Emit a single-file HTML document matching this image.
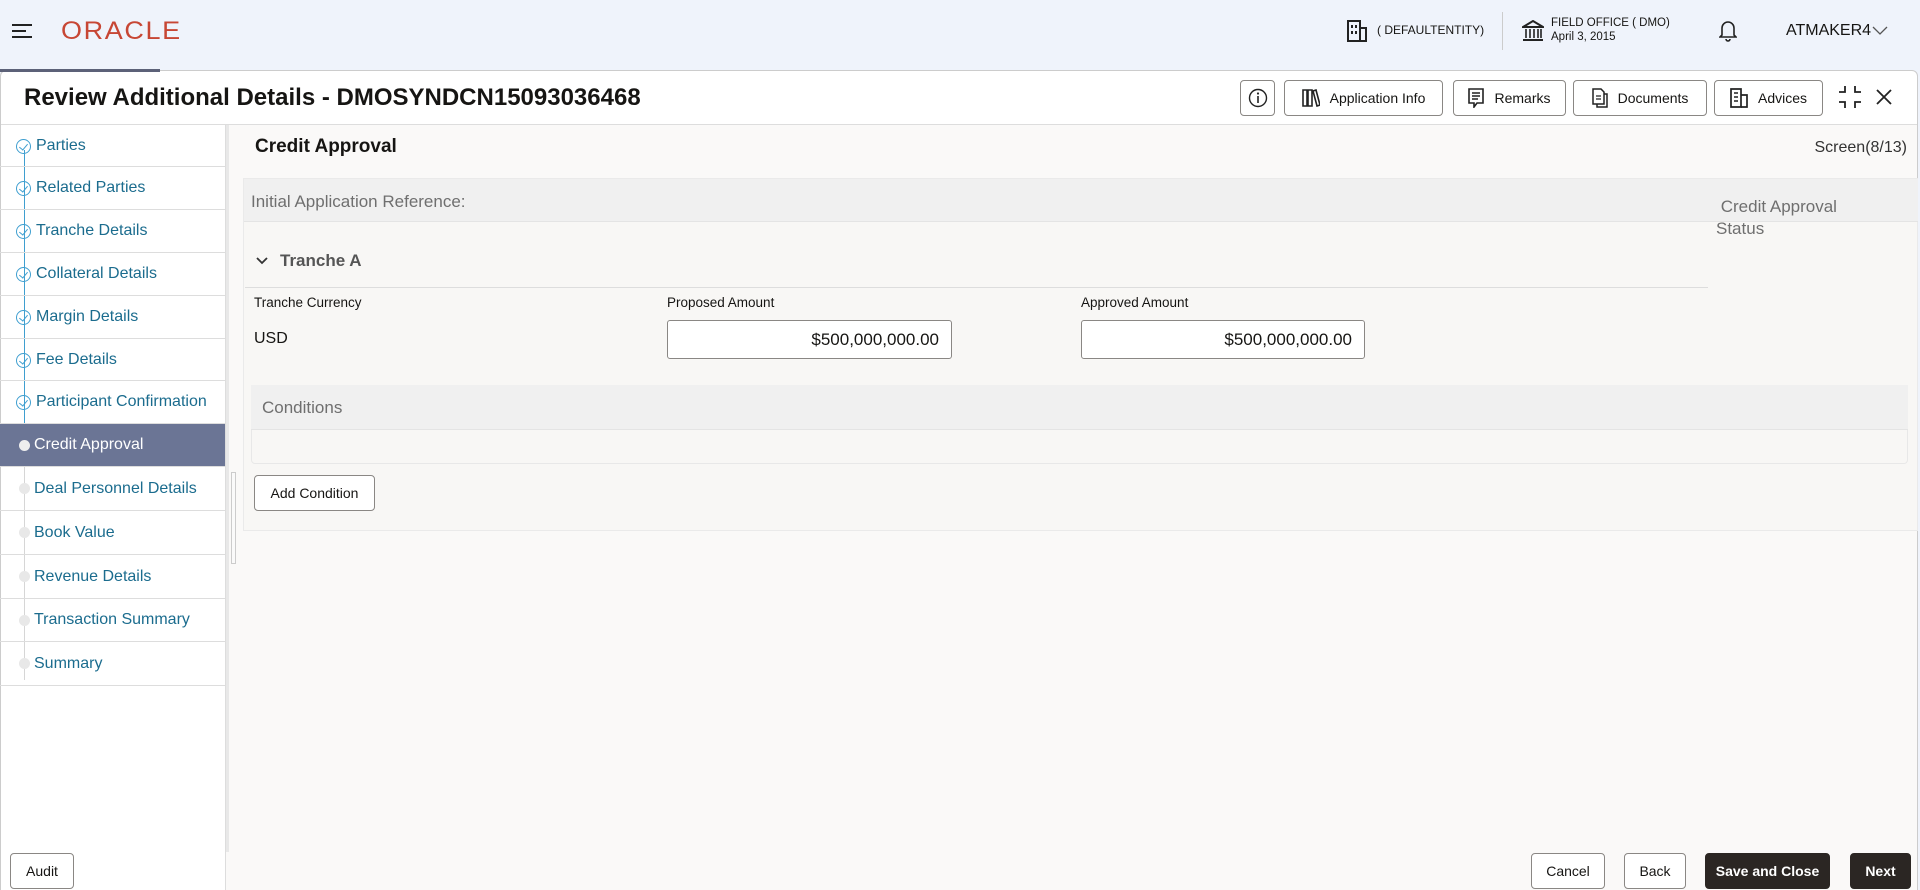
<!DOCTYPE html>
<html><head><meta charset="utf-8"><style>
*{box-sizing:border-box;margin:0;padding:0}
body{width:1920px;height:890px;overflow:hidden;background:#eff3fb;font-family:"Liberation Sans",sans-serif;position:relative;color:#161513}
.a{position:absolute}
.btn{position:absolute;border:1px solid #8a8784;border-radius:4px;background:#fff;font-size:14px;display:flex;align-items:center;justify-content:center;gap:10px;color:#161513}
.nav{position:absolute;left:0;width:225px;border-bottom:1px solid #ddd;font-size:16px;color:#1b6c8e;padding-left:36px;display:flex;align-items:center}
.dot{position:absolute;left:19px;width:11px;height:11px;border-radius:50%;background:#e8e8e8}
.chk{position:absolute;left:16px;width:15px;height:15px;border-radius:50%;border:1.3px solid #3f9fd0}
.chk:after{content:"";position:absolute;left:4px;top:2px;width:4px;height:7px;border:solid #3f9fd0;border-width:0 1.3px 1.3px 0;transform:rotate(40deg)}
.lbl{position:absolute;font-size:13.5px;color:#161513}
.inp{position:absolute;background:#fff;border:1px solid #8a8784;border-radius:3px;height:39px;font-size:17px;text-align:right;padding:9px 12px}
</style></head><body>
<div class="a" style="left:12px;top:24px;width:20px;height:2px;background:#222"></div>
<div class="a" style="left:12px;top:30px;width:14px;height:2px;background:#222"></div>
<div class="a" style="left:12px;top:36px;width:20px;height:2px;background:#222"></div>
<div class="a" style="left:61px;top:17px;font-size:25px;color:#c74634;letter-spacing:1.5px;transform:scaleX(1.08);transform-origin:left">ORACLE</div>
<svg class="a" style="left:1347px;top:20px" width="20" height="22" viewBox="0 0 20 22"><rect x="1" y="1" width="12" height="20" fill="none" stroke="#222" stroke-width="2"/><rect x="13" y="8" width="6" height="13" fill="none" stroke="#222" stroke-width="2"/><rect x="4" y="5" width="2" height="3" fill="#222"/><rect x="8" y="5" width="2" height="3" fill="#222"/><rect x="4" y="11" width="2" height="3" fill="#222"/><rect x="8" y="11" width="2" height="3" fill="#222"/></svg>
<div class="a" style="left:1377px;top:23px;font-size:12px">( DEFAULTENTITY)</div>
<div class="a" style="left:1502px;top:12px;width:1px;height:38px;background:#ccc"></div>
<svg class="a" style="left:1522px;top:20px" width="22" height="22" viewBox="0 0 22 22"><path d="M1 7 L11 1 L21 7 Z" fill="none" stroke="#222" stroke-width="2"/><path d="M4 9v9M8 9v9M12 9v9M16 9v9M19 9v9" stroke="#222" stroke-width="1.6"/><path d="M1 20h20" stroke="#222" stroke-width="2"/></svg>
<div class="a" style="left:1551px;top:16px;font-size:11.5px;line-height:14px">FIELD OFFICE ( DMO)<br>April 3, 2015</div>
<svg class="a" style="left:1719px;top:18px" width="18" height="24" viewBox="0 0 18 24"><path d="M3 17V10a6 6 0 0 1 12 0v7l2 2H1z" fill="none" stroke="#222" stroke-width="1.6"/><path d="M7 21a2 2 0 0 0 4 0" fill="none" stroke="#222" stroke-width="1.6"/></svg>
<div class="a" style="left:1786px;top:22px;font-size:16px">ATMAKER4</div>
<svg class="a" style="left:1872px;top:26px" width="16" height="10"><path d="M1 1l7 7 7-7" fill="none" stroke="#555" stroke-width="1.3"/></svg>
<div class="a" style="left:0;top:70px;width:1918px;height:820px;background:#fff;border:1px solid #ccc;border-radius:6px 6px 0 0"></div>
<div class="a" style="left:0;top:69px;width:160px;height:3px;background:#5c6178"></div>
<div class="a" style="left:24px;top:84px;font-size:24px;font-weight:bold;color:#161513">Review Additional Details - DMOSYNDCN15093036468</div>
<div class="btn" style="left:1240px;top:80px;width:35px;height:36px"><svg width="20" height="20"><circle cx="10" cy="10" r="8.5" fill="none" stroke="#222" stroke-width="1.4"/><path d="M10 8v7" stroke="#222" stroke-width="1.6"/><circle cx="10" cy="5.5" r="1.1" fill="#222"/></svg></div>
<div class="btn" style="left:1284px;top:80px;width:159px;height:36px"><svg width="18" height="18"><path d="M1 1h4v16H1zM6 1h4v16H6zM11 2l3-1 4 15-3 1z" fill="none" stroke="#222" stroke-width="1.6"/></svg>Application Info</div>
<div class="btn" style="left:1453px;top:80px;width:113px;height:36px"><svg width="16" height="20"><path d="M1 1h14v14H9l-3 4v-4H1z" fill="none" stroke="#222" stroke-width="1.6"/><path d="M4 5h8M4 8h8M4 11h6" stroke="#222" stroke-width="1.4"/></svg>Remarks</div>
<div class="btn" style="left:1573px;top:80px;width:134px;height:36px"><svg width="16" height="20"><path d="M1 1h8l3 3v12H1z" fill="none" stroke="#222" stroke-width="1.5"/><path d="M12 6h3v13H5v-3" fill="none" stroke="#222" stroke-width="1.5"/><path d="M4 8h5M4 11h5" stroke="#222" stroke-width="1.3"/></svg>Documents</div>
<div class="btn" style="left:1714px;top:80px;width:109px;height:36px"><svg width="18" height="20"><path d="M1 1h10v18H1z" fill="none" stroke="#222" stroke-width="1.7"/><path d="M11 7h6v12h-6" fill="none" stroke="#222" stroke-width="1.7"/><path d="M4 5h4M4 9h4M4 13h4" stroke="#222" stroke-width="1.5"/></svg>Advices</div>
<svg class="a" style="left:1838px;top:85px" width="24" height="24"><path d="M7 1v6H1M17 1v6h6M7 23v-6H1M17 23v-6h6" fill="none" stroke="#222" stroke-width="1.8"/></svg>
<svg class="a" style="left:1876px;top:89px" width="16" height="16"><path d="M1 1l14 14M15 1L1 15" stroke="#222" stroke-width="1.8"/></svg>
<div class="a" style="left:1px;top:124px;width:1916px;height:1px;background:#ddd"></div>
<div class="a" style="left:226px;top:125px;width:1691px;height:765px;background:#faf9f8"></div>
<div class="a" style="left:226px;top:125px;width:3px;height:727px;background:#e8e8e8"></div>
<div class="a" style="left:231px;top:472px;width:5px;height:92px;border:1px solid #ccc;background:#fafafa"></div>
<div class="a" style="left:1px;top:125px;width:225px;height:727px;background:#fff;border-right:1px solid #ddd"></div>
<div class="a" style="left:24px;top:150px;width:1px;height:530px;background:#d6d6d6"></div>
<div class="a" style="left:24px;top:150px;width:1px;height:274px;background:#3f9fd0"></div>
<div class="nav" style="top:125px;height:42px"><span class="chk" style="top:14px"></span>Parties</div>
<div class="nav" style="top:167px;height:43px"><span class="chk" style="top:14px"></span>Related Parties</div>
<div class="nav" style="top:210px;height:43px"><span class="chk" style="top:14px"></span>Tranche Details</div>
<div class="nav" style="top:253px;height:43px"><span class="chk" style="top:14px"></span>Collateral Details</div>
<div class="nav" style="top:296px;height:43px"><span class="chk" style="top:14px"></span>Margin Details</div>
<div class="nav" style="top:339px;height:42px"><span class="chk" style="top:14px"></span>Fee Details</div>
<div class="nav" style="top:381px;height:43px"><span class="chk" style="top:14px"></span>Participant Confirmation</div>
<div class="nav" style="top:424px;height:43px;background:#6b7595;color:#fff;padding-left:34px"><span class="dot" style="top:16px;background:#eee"></span>Credit Approval</div>
<div class="nav" style="top:467px;height:44px;padding-left:34px"><span class="dot" style="top:16px"></span>Deal Personnel Details</div>
<div class="nav" style="top:511px;height:44px;padding-left:34px"><span class="dot" style="top:16px"></span>Book Value</div>
<div class="nav" style="top:555px;height:44px;padding-left:34px"><span class="dot" style="top:16px"></span>Revenue Details</div>
<div class="nav" style="top:599px;height:43px;padding-left:34px"><span class="dot" style="top:16px"></span>Transaction Summary</div>
<div class="nav" style="top:642px;height:44px;padding-left:34px"><span class="dot" style="top:16px"></span>Summary</div>
<div class="a" style="left:255px;top:136px;font-size:19px;font-weight:bold">Credit Approval</div>
<div class="a" style="right:13px;top:139px;font-size:16px;color:#333">Screen(8/13)</div>
<div class="a" style="left:243px;top:178px;width:1675px;height:353px;background:#f8f7f5;border:1px solid #eaeaea"></div>
<div class="a" style="left:244px;top:179px;width:1674px;height:43px;background:#f0f0f0;border-bottom:1px solid #e4e4e4"></div>
<div class="a" style="left:251px;top:192px;font-size:17px;color:#6f6f6f">Initial Application Reference:</div>
<div class="a" style="left:1716px;top:196px;font-size:17px;color:#6f6f6f;line-height:22px">&nbsp;Credit Approval<br>Status</div>
<svg class="a" style="left:256px;top:257px" width="12" height="9"><path d="M1 1l5 5 5-5" fill="none" stroke="#333" stroke-width="1.8"/></svg>
<div class="a" style="left:280px;top:251px;font-size:17px;font-weight:bold;color:#555">Tranche A</div>
<div class="a" style="left:245px;top:287px;width:1463px;height:1px;background:#ddd"></div>
<div class="lbl" style="left:254px;top:295px">Tranche Currency</div>
<div class="lbl" style="left:667px;top:295px">Proposed Amount</div>
<div class="lbl" style="left:1081px;top:295px">Approved Amount</div>
<div class="a" style="left:254px;top:330px;font-size:16px">USD</div>
<div class="inp" style="left:667px;top:320px;width:285px">$500,000,000.00</div>
<div class="inp" style="left:1081px;top:320px;width:284px">$500,000,000.00</div>
<div class="a" style="left:251px;top:385px;width:1657px;height:79px;border:1px solid #e8e8e8;border-radius:4px;background:#f8f7f5"></div>
<div class="a" style="left:251px;top:385px;width:1657px;height:45px;background:#f0f0f0;border-bottom:1px solid #e4e4e4"></div>
<div class="a" style="left:262px;top:398px;font-size:17px;color:#6f6f6f">Conditions</div>
<div class="btn" style="left:254px;top:475px;width:121px;height:36px">Add Condition</div>
<div class="a" style="left:1px;top:852px;width:225px;height:38px;background:#fff;border-right:1px solid #ddd"></div>
<div class="btn" style="left:10px;top:853px;width:64px;height:36px">Audit</div>
<div class="btn" style="left:1531px;top:853px;width:74px;height:36px">Cancel</div>
<div class="btn" style="left:1624px;top:853px;width:62px;height:36px">Back</div>
<div class="btn" style="left:1705px;top:853px;width:125px;height:36px;background:#2b2623;border-color:#2b2623;color:#fff;font-weight:bold">Save and Close</div>
<div class="btn" style="left:1850px;top:853px;width:61px;height:36px;background:#2b2623;border-color:#2b2623;color:#fff;font-weight:bold">Next</div>
</body></html>
